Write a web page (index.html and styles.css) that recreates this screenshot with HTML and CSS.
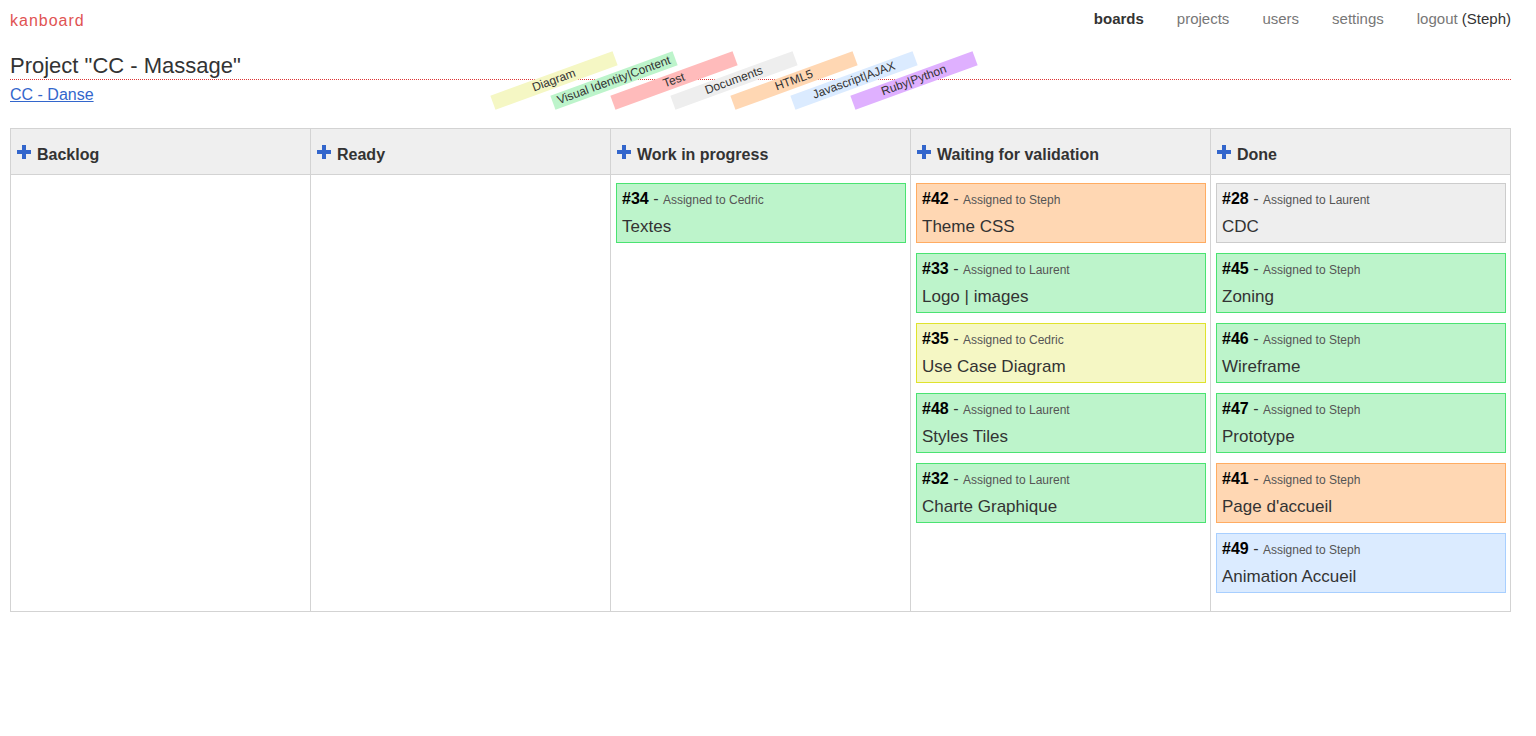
FILE: index.html
```html
<!DOCTYPE html>
<html lang="en">
<head>
<meta charset="utf-8">
<title>kanboard</title>
<link rel="stylesheet" href="styles.css">
</head>
<body>
<header class="topbar">
  <a class="logo" href="#">kanboard</a>
  <nav class="menu">
    <a class="menu-link active" href="#">boards</a>
    <a class="menu-link" href="#">projects</a>
    <a class="menu-link" href="#">users</a>
    <a class="menu-link" href="#">settings</a>
    <span class="session"><a class="menu-link" href="#">logout</a> (Steph)</span>
  </nav>
</header>
<main class="page">
  <div class="page-header">
    <h2 class="title">Project "CC - Massage"</h2>
    <ul class="legend">
      <li class="tag yellow">Diagram</li>
      <li class="tag green">Visual Identity|Content</li>
      <li class="tag red">Test</li>
      <li class="tag grey">Documents</li>
      <li class="tag orange">HTML5</li>
      <li class="tag blue">Javascript|AJAX</li>
      <li class="tag purple">Ruby|Python</li>
    </ul>
  </div>
  <a class="switch" href="#">CC - Danse</a>
  <table class="board">
    <thead>
      <tr>
        <th><a class="add" href="#" aria-label="Add a task to Backlog"></a>Backlog</th>
        <th><a class="add" href="#" aria-label="Add a task to Ready"></a>Ready</th>
        <th><a class="add" href="#" aria-label="Add a task to Work in progress"></a>Work in progress</th>
        <th><a class="add" href="#" aria-label="Add a task to Waiting for validation"></a>Waiting for validation</th>
        <th><a class="add" href="#" aria-label="Add a task to Done"></a>Done</th>
      </tr>
    </thead>
    <tbody>
      <tr>
        <td></td>
        <td></td>
        <td>
          <div class="task green"><div class="meta"><a class="num" href="#">#34</a> - <span class="who">Assigned to Cedric</span></div><a class="name" href="#">Textes</a></div>
        </td>
        <td>
          <div class="task orange"><div class="meta"><a class="num" href="#">#42</a> - <span class="who">Assigned to Steph</span></div><a class="name" href="#">Theme CSS</a></div>
          <div class="task green"><div class="meta"><a class="num" href="#">#33</a> - <span class="who">Assigned to Laurent</span></div><a class="name" href="#">Logo | images</a></div>
          <div class="task yellow"><div class="meta"><a class="num" href="#">#35</a> - <span class="who">Assigned to Cedric</span></div><a class="name" href="#">Use Case Diagram</a></div>
          <div class="task green"><div class="meta"><a class="num" href="#">#48</a> - <span class="who">Assigned to Laurent</span></div><a class="name" href="#">Styles Tiles</a></div>
          <div class="task green"><div class="meta"><a class="num" href="#">#32</a> - <span class="who">Assigned to Laurent</span></div><a class="name" href="#">Charte Graphique</a></div>
        </td>
        <td>
          <div class="task grey"><div class="meta"><a class="num" href="#">#28</a> - <span class="who">Assigned to Laurent</span></div><a class="name" href="#">CDC</a></div>
          <div class="task green"><div class="meta"><a class="num" href="#">#45</a> - <span class="who">Assigned to Steph</span></div><a class="name" href="#">Zoning</a></div>
          <div class="task green"><div class="meta"><a class="num" href="#">#46</a> - <span class="who">Assigned to Steph</span></div><a class="name" href="#">Wireframe</a></div>
          <div class="task green"><div class="meta"><a class="num" href="#">#47</a> - <span class="who">Assigned to Steph</span></div><a class="name" href="#">Prototype</a></div>
          <div class="task orange"><div class="meta"><a class="num" href="#">#41</a> - <span class="who">Assigned to Steph</span></div><a class="name" href="#">Page d'accueil</a></div>
          <div class="task blue"><div class="meta"><a class="num" href="#">#49</a> - <span class="who">Assigned to Steph</span></div><a class="name" href="#">Animation Accueil</a></div>
        </td>
      </tr>
    </tbody>
  </table>
</main>
</body>
</html>
```
FILE: styles.css
```css
* { box-sizing: border-box; }
body {
  margin: 0;
  padding: 10px 25px 10px 10px;
  background: #fff;
  color: #333;
  font-family: "Liberation Sans", Arial, sans-serif;
  font-size: 16px;
}
a { color: #36c; }
.topbar {
  display: flex;
  justify-content: space-between;
}
.logo {
  color: #df5353;
  line-height: 22px;
  letter-spacing: 1px;
  text-decoration: none;
}
.menu {
  display: flex;
  gap: 33px;
  font-size: 15px;
  line-height: 18px;
}
.menu-link {
  color: #777;
  text-decoration: none;
}
.menu-link.active {
  color: #333;
  font-weight: bold;
}
.page-header {
  position: relative;
  margin-top: 20px;
  border-bottom: 1px dotted #d33;
}
.title {
  margin: 0;
  font-size: 22px;
  font-weight: normal;
  line-height: 27px;
}
.legend {
  position: absolute;
  left: 479px;
  top: 21px;
  display: flex;
  margin: 0;
  padding: 0;
  list-style: none;
}
.tag {
  width: 130px;
  height: 15px;
  margin-right: -70px;
  font-size: 12px;
  line-height: 15px;
  text-align: center;
  white-space: nowrap;
  transform: rotate(-20deg);
}
.switch {
  display: block;
  width: fit-content;
  margin-top: 4px;
  line-height: 22px;
}
.board {
  width: 100%;
  margin-top: 22px;
  border-collapse: collapse;
  table-layout: fixed;
}
.board th {
  height: 46px;
  padding: 5px 6px 0;
  border: 1px solid #d3d3d3;
  background: #efefef;
  text-align: left;
}
.board td {
  padding: 8px 4px 8px 5px;
  border: 1px solid #d3d3d3;
  vertical-align: top;
}
.add {
  display: inline-block;
  width: 14px;
  height: 14px;
  margin-right: 6px;
  vertical-align: 1px;
  background:
    linear-gradient(#36c, #36c) center / 14px 4px no-repeat,
    linear-gradient(#36c, #36c) center / 4px 14px no-repeat;
}
.task {
  margin-bottom: 10px;
  padding: 5px;
  border: 1px solid;
}
.meta {
  font-size: 16px;
  line-height: 20px;
}
.num {
  color: #000;
  font-weight: bold;
  text-decoration: none;
}
.who {
  color: #555;
  font-size: 12px;
  line-height: 12px;
}
.name {
  display: block;
  margin-top: 8px;
  color: #333;
  font-size: 17px;
  line-height: 20px;
  text-decoration: none;
}
.yellow { background: #f5f7c4; border-color: #dfe32d; }
.green { background: #bdf4cb; border-color: #4ae371; }
.red { background: #ffbbbb; border-color: #ff9797; }
.grey { background: #eee; border-color: #ccc; }
.orange { background: #ffd7b3; border-color: #ffac62; }
.blue { background: #dbebff; border-color: #a8cfff; }
.purple { background: #dfb0ff; border-color: #cd85fe; }
```
